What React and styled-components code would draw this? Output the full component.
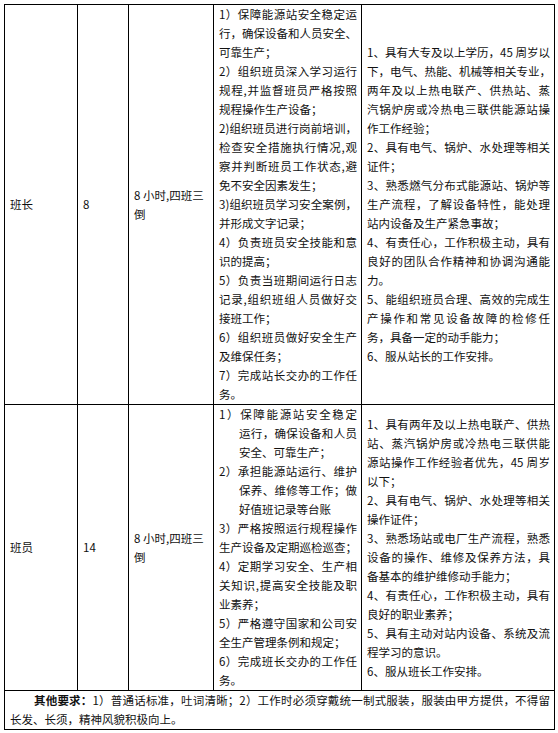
import React from 'react'
import styled, { createGlobalStyle } from 'styled-components'

const GlobalStyle = createGlobalStyle`
  html, body {
    margin: 0;
    padding: 0;
    background: #fff;
  }
  body {
    font-family: 'Noto Sans CJK SC', 'Liberation Serif', serif;
    color: #111;
  }
`

const Page = styled.div`
  padding: 4px 0 0 4px;
`

const Table = styled.table`
  width: 550px;
  table-layout: fixed;
  border-collapse: collapse;
  font-size: 11.5px;
  line-height: 19px;
`

const Cell = styled.td`
  border: 1px solid #000;
  padding: 0 4px 0 5px;
  vertical-align: ${(p) => (p.$top ? 'top' : 'middle')};
  overflow: visible;
`

const Line = styled.div`
  white-space: nowrap;
  padding-left: ${(p) => (p.$hang ? '20px' : '0')};
  text-align: left;
  text-align-last: ${(p) => (p.$justify ? 'justify' : 'auto')};
`

const Note = styled.td`
  border: 1px solid #000;
  padding: 0 4px 0 5px;
  line-height: 19px;
`

const NoteLabel = styled.b`
  font-weight: 700;
`

const FirstNoteLine = styled(Line)`
  text-indent: 24px;
`

const rows = [
  {
    name: '班长',
    count: '8',
    shift: ['8 小时,四班三', '倒'],
    duties: [
      ['1）保障能源站安全稳定运', '行，确保设备和人员安全、', '可靠生产；'],
      ['2）组织班员深入学习运行', '规程,并监督班员严格按照', '规程操作生产设备；'],
      ['2)组织班员进行岗前培训，', '检查安全措施执行情况,观', '察并判断班员工作状态,避', '免不安全因素发生；'],
      ['3)组织班员学习安全案例，', '并形成文字记录；'],
      ['4）负责班员安全技能和意', '识的提高；'],
      ['5）负责当班期间运行日志', '记录,组织班组人员做好交', '接班工作；'],
      ['6）组织班员做好安全生产', '及维保任务；'],
      ['7）完成站长交办的工作任', '务。'],
    ],
    hang: [],
    needs: [
      ['1、具有大专及以上学历，45 周岁以', '下，电气、热能、机械等相关专业，', '两年及以上热电联产、供热站、蒸', '汽锅炉房或冷热电三联供能源站操', '作工作经验；'],
      ['2、具有电气、锅炉、水处理等相关', '证件；'],
      ['3、熟悉燃气分布式能源站、锅炉等', '生产流程，了解设备特性，能处理', '站内设备及生产紧急事故；'],
      ['4、有责任心，工作积极主动，具有', '良好的团队合作精神和协调沟通能', '力。'],
      ['5、能组织班员合理、高效的完成生', '产操作和常见设备故障的检修任', '务，具备一定的动手能力；'],
      ['6、服从站长的工作安排。'],
    ],
  },
  {
    name: '班员',
    count: '14',
    shift: ['8 小时,四班三', '倒'],
    duties: [
      ['1）保障能源站安全稳定', '运行，确保设备和人员', '安全、可靠生产；'],
      ['2）承担能源站运行、维护', '保养、维修等工作；做', '好值班记录等台账'],
      ['3）严格按照运行规程操作', '生产设备及定期巡检巡查；'],
      ['4）定期学习安全、生产相', '关知识,提高安全技能及职', '业素养；'],
      ['5）严格遵守国家和公司安', '全生产管理条例和规定；'],
      ['6）完成班长交办的工作任', '务。'],
    ],
    hang: [0, 1],
    needs: [
      ['1、具有两年及以上热电联产、供热', '站、蒸汽锅炉房或冷热电三联供能', '源站操作工作经验者优先，45 周岁', '以下；'],
      ['2、具有电气、锅炉、水处理等相关', '操作证件；'],
      ['3、熟悉场站或电厂生产流程，熟悉', '设备的操作、维修及保养方法，具', '备基本的维护维修动手能力；'],
      ['4、有责任心，工作积极主动，具有', '良好的职业素养；'],
      ['5、具有主动对站内设备、系统及流', '程学习的意识。'],
      ['6、服从班长工作安排。'],
    ],
  },
]

function Paragraphs({ items, hang = [] }) {
  return items.map((lines, i) =>
    lines.map((text, j) => (
      <Line
        key={`${i}-${j}`}
        $justify={j < lines.length - 1}
        $hang={hang.includes(i) && j > 0}
      >
        {text}
      </Line>
    ))
  )
}

export default function App() {
  return (
    <Page>
      <GlobalStyle />
      <Table>
        <colgroup>
          <col style={{ width: 73 }} />
          <col style={{ width: 51 }} />
          <col style={{ width: 85 }} />
          <col style={{ width: 148 }} />
          <col style={{ width: 193 }} />
        </colgroup>
        <tbody>
          {rows.map((row) => (
            <tr key={row.name}>
              <Cell>{row.name}</Cell>
              <Cell>{row.count}</Cell>
              <Cell>
                {row.shift.map((s) => (
                  <Line key={s}>{s}</Line>
                ))}
              </Cell>
              <Cell $top>
                <Paragraphs items={row.duties} hang={row.hang} />
              </Cell>
              <Cell>
                <Paragraphs items={row.needs} />
              </Cell>
            </tr>
          ))}
          <tr>
            <Note colSpan={5}>
              <FirstNoteLine $justify>
                <NoteLabel>其他要求：</NoteLabel>
                1）普通话标准，吐词清晰；2）工作时必须穿戴统一制式服装，服装由甲方提供，不得留
              </FirstNoteLine>
              <Line>长发、长须，精神风貌积极向上。</Line>
            </Note>
          </tr>
        </tbody>
      </Table>
    </Page>
  )
}
